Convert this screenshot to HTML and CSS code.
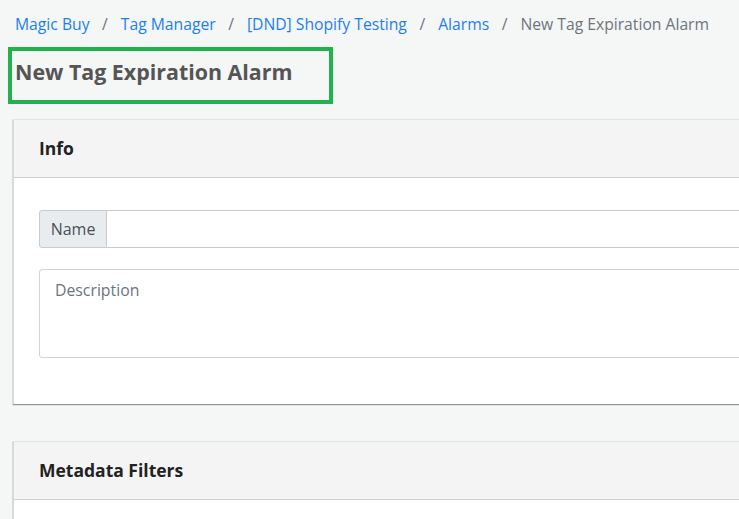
FILE: index.html
```html
<!DOCTYPE html>
<html>
<head>
<meta charset="utf-8">
<link rel="stylesheet" href="styles.css">
</head>
<body>
<nav class="crumbs">
  <a class="crumb" href="#">Magic Buy</a><span class="sep">/</span>
  <a class="crumb" href="#">Tag Manager</a><span class="sep">/</span>
  <a class="crumb" href="#">[DND] Shopify Testing</a><span class="sep">/</span>
  <a class="crumb" href="#">Alarms</a><span class="sep">/</span>
  <span class="crumb current">New Tag Expiration Alarm</span>
</nav>
<div class="title-box"><h1 class="title">New Tag Expiration Alarm</h1></div>
<main class="content">
  <section class="card">
    <header class="card-head">Info</header>
    <div class="card-body">
      <div class="input-group">
        <span class="addon">Name</span>
        <input class="field" type="text">
      </div>
      <textarea class="area" placeholder="Description"></textarea>
    </div>
  </section>
  <section class="card">
    <header class="card-head">Metadata Filters</header>
    <div class="card-body"></div>
  </section>
</main>
</body>
</html>
```
FILE: styles.css
```css
html, body { margin: 0; padding: 0; }
body {
  background: #f5f6f6;
  font-family: "Open Sans", "Noto Sans", sans-serif;
  color: #333;
  width: 739px;
  overflow: hidden;
  height: 519px;
}
.crumbs {
  display: flex;
  align-items: center;
  padding: 13px 0 0 15px;
  height: 22px;
  font-size: 15.7px;
  white-space: nowrap;
}
.crumb { color: #1a7ff5; text-decoration: none; }
.crumb.current { color: #6c757d; }
.sep { color: #6c757d; padding: 0 13px 0 12.5px; }
.title-box {
  margin: 12px 0 0 8px;
  width: 317px;
  height: 49px;
  border: 4px solid #22b14c;
  display: flex;
  align-items: center;
}
.title {
  margin: 0 0 8px 3px;
  font-size: 21.4px;
  font-weight: 700;
  color: #555;
  white-space: nowrap;
}
.content {
  padding: 15px 0 0 13px;
  display: flex;
  flex-direction: column;
  gap: 37px;
}
.card {
  background: #fff;
  border-left: 1px solid #d8dada;
  border-top: 1px solid #e2e4e4;
  box-shadow: 0 1px 1px 0 #8c9898, -1px 1px 1px rgba(0,0,0,0.06);
  width: 760px;
  flex: none;
}
.card-head {
  background: #f4f4f4;
  border-bottom: 1px solid #cfd1d1;
  height: 57px;
  box-sizing: content-box;
  display: flex;
  align-items: center;
  padding-left: 25px;
  padding-bottom: 0;
  font-size: 17.5px;
  font-weight: 700;
  color: #222;
  line-height: 1;
}
.card-head::after { content: ""; }
.card-body {
  padding: 32px 0 46px 25px;
  display: flex;
  flex-direction: column;
  gap: 21px;
}
.input-group {
  display: flex;
  height: 38px;
}
.addon {
  background: #e9ecef;
  border: 1px solid #c8cbcd;
  border-radius: 3px 0 0 3px;
  display: flex;
  align-items: center;
  justify-content: center;
  font-size: 16px;
  color: #495057;
  box-sizing: border-box;
  width: 68px;
}
.field {
  flex: 1;
  border: 1px solid #c8cbcd;
  border-left: none;
  margin: 0;
  padding: 0;
  background: #fff;
}
.area {
  display: block;
  height: 89px;
  box-sizing: border-box;
  border: 1px solid #ced4da;
  border-radius: 3px;
  padding: 9px 15px;
  font-family: "Open Sans", "Noto Sans", sans-serif;
  font-size: 15.8px;
  resize: none;
  margin: 0;
  width: 740px;
}
.area::placeholder { color: #6c757d; }
```
